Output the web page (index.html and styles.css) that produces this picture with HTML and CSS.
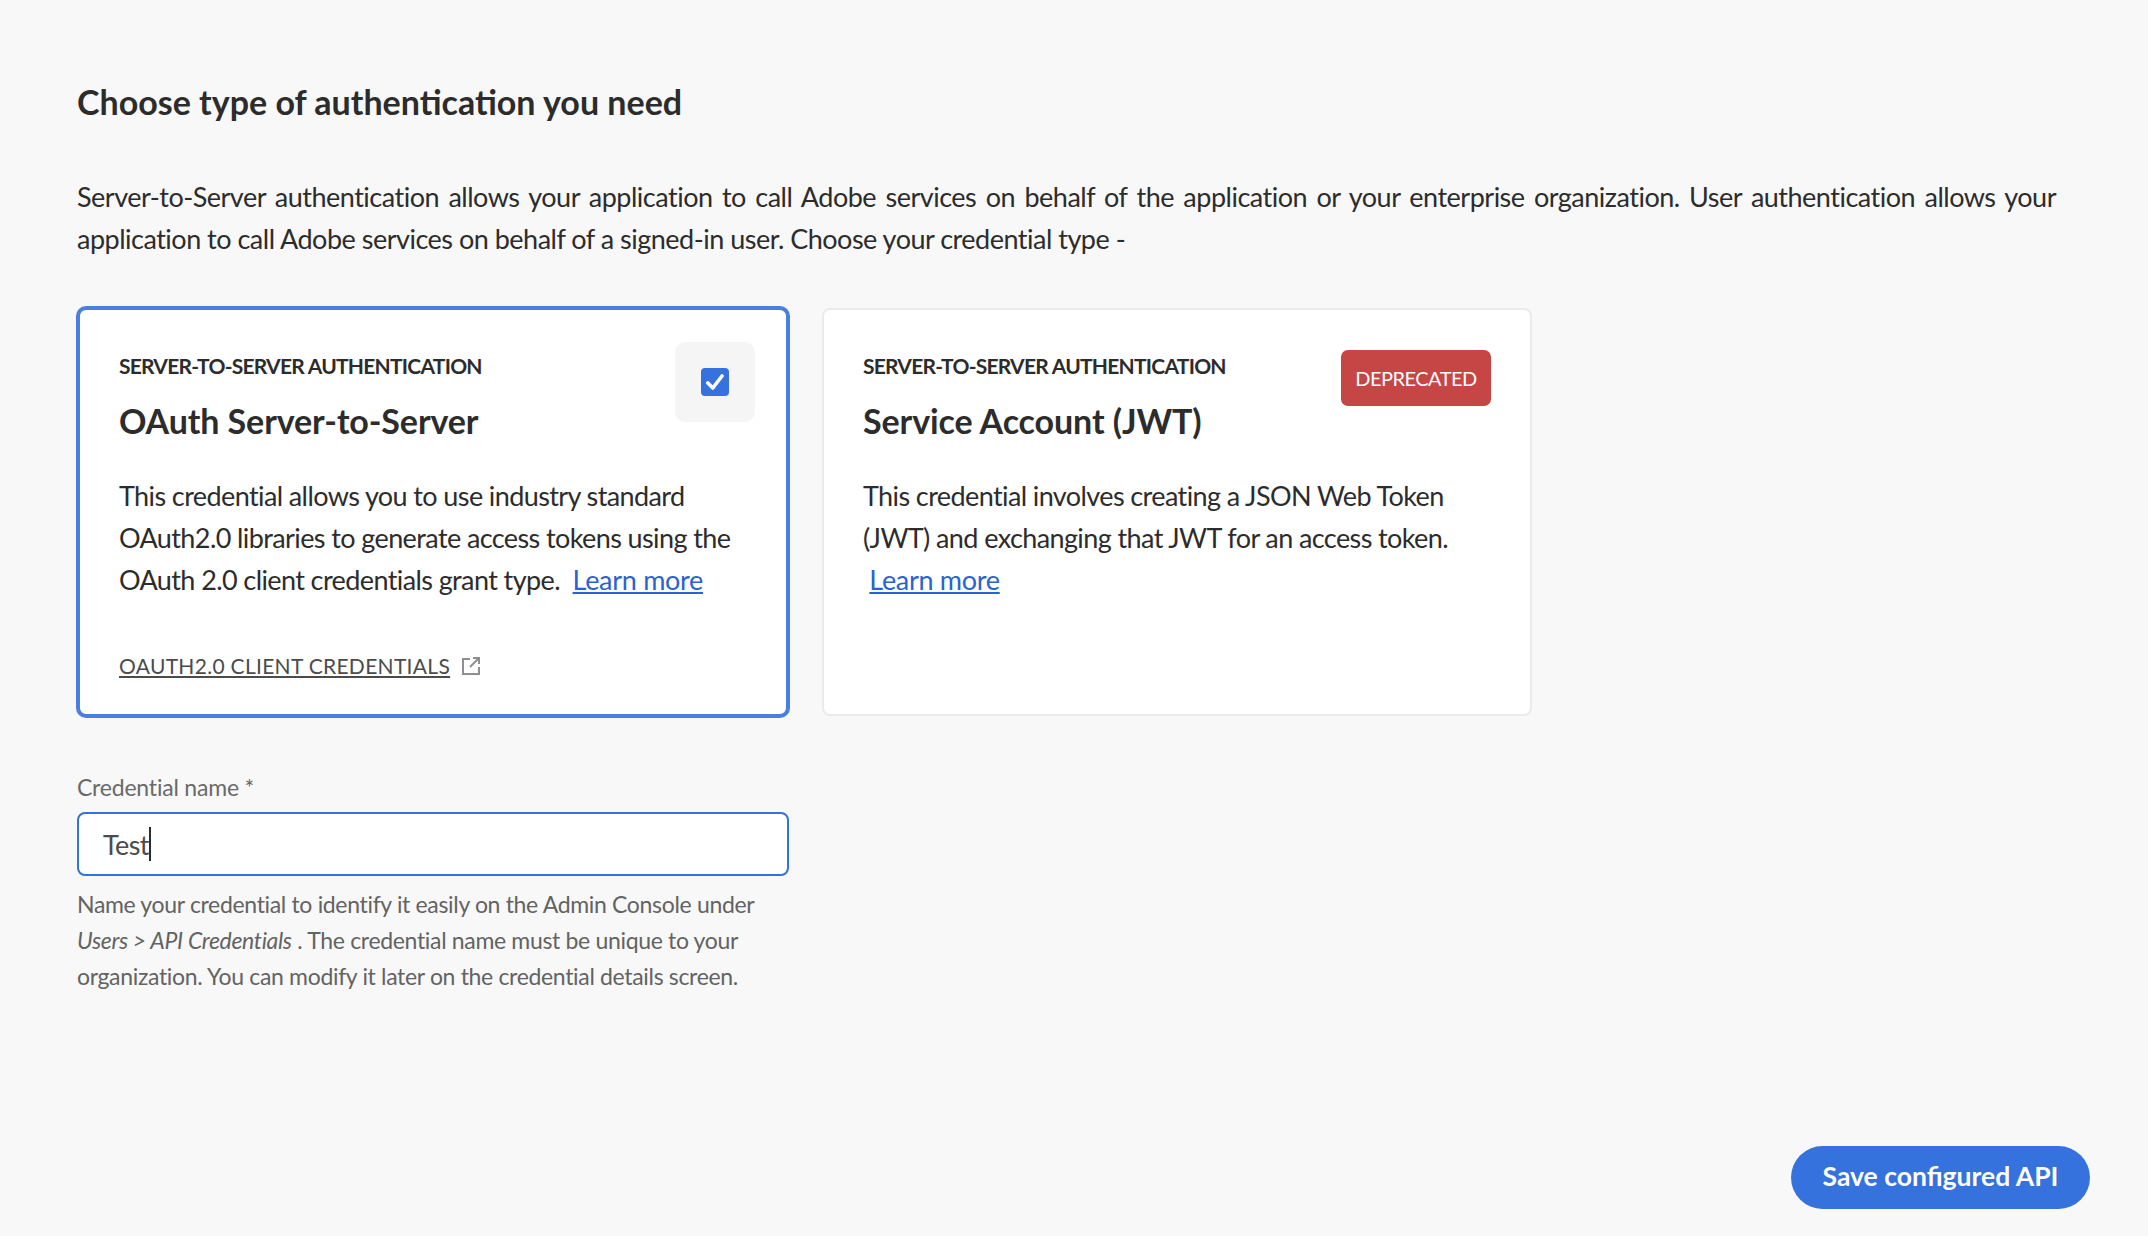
FILE: index.html
```html
<!DOCTYPE html>
<html lang="en">
<head>
    <meta charset="UTF-8">
    <meta name="viewport" content="width=device-width, initial-scale=1.0">
    <title>Choose type of authentication</title>
    <link rel="stylesheet" href="styles.css">
</head>
<body>
    <div class="page">
        <div class="content">
            <h1 class="heading">Choose type of authentication you need</h1>
            <p class="intro">Server-to-Server authentication allows your application to call Adobe services on behalf of the application or your enterprise organization. User authentication allows your application to call Adobe services on behalf of a signed-in user. Choose your credential type -</p>

            <div class="cards">
                <div class="card card-selected">
                    <div class="select-box">
                        <span class="checkbox">
                            <svg width="18" height="16" viewBox="0 0 18 16"><path d="M1.8 9 L6.8 14 L16 2" fill="none" stroke="#fff" stroke-width="3.6" stroke-linecap="round" stroke-linejoin="round"/></svg>
                        </span>
                    </div>
                    <div class="card-label">SERVER-TO-SERVER AUTHENTICATION</div>
                    <h2 class="card-title">OAuth Server-to-Server</h2>
                    <p class="card-text">This credential allows you to use industry standard OAuth2.0 libraries to generate access tokens using the OAuth 2.0 client credentials grant type.&nbsp; <a class="learn" href="#">Learn more</a></p>
                    <div class="card-link">
                        <a href="#">OAUTH2.0 CLIENT CREDENTIALS</a>
                        <svg width="18" height="18" viewBox="0 0 18 18" fill="none" stroke="#8e8e8e" stroke-width="2"><path d="M8 2 H1 V17 H17 V10"/><path d="M8 10 L16 2"/><path d="M11 1 H17 V7"/></svg>
                    </div>
                </div>

                <div class="card card-plain">
                    <div class="badge">DEPRECATED</div>
                    <div class="card-label">SERVER-TO-SERVER AUTHENTICATION</div>
                    <h2 class="card-title">Service Account (JWT)</h2>
                    <p class="card-text">This credential involves creating a JSON Web Token (JWT) and exchanging that JWT for an access token.<br>&nbsp;<a class="learn" href="#">Learn more</a></p>
                </div>
            </div>

            <div class="field">
                <label class="field-label">Credential name *</label>
                <div class="input"><span>Test</span><span class="caret"></span></div>
                <p class="help">Name your credential to identify it easily on the Admin Console under <em>Users &gt; API Credentials</em> . The credential name must be unique to your organization. You can modify it later on the credential details screen.</p>
            </div>
        </div>

        <div class="footer">
            <button class="save">Save configured API</button>
        </div>
    </div>
</body>
</html>
```

FILE: styles.css
```css
* {
    box-sizing: border-box;
}
body {
    margin: 0;
    background-color: #f8f8f8;
    color: #2c2c2c;
    font-family: Lato, "Open Sans", sans-serif;
}
.page {
    display: flex;
    flex-direction: column;
    justify-content: space-between;
    height: 100vh;
}
.content {
    padding: 82px 92px 0 76px;
}
.heading {
    margin: 0;
    padding-left: 1px;
    font-size: 34px;
    line-height: 40px;
    font-weight: 700;
}
.intro {
    margin: 54px 0 0;
    padding-left: 1px;
    font-size: 27px;
    line-height: 42px;
    letter-spacing: -0.5px;
    text-align: justify;
}
.cards {
    display: flex;
    align-items: center;
    gap: 32px;
    margin-top: 46px;
}
.card {
    position: relative;
    background: white;
}
.card-selected {
    width: 714px;
    height: 412px;
    padding: 38px 39px;
    border: 4px solid #4a7fe0;
    border-radius: 10px;
}
.card-plain {
    width: 710px;
    height: 408px;
    padding: 38px 39px;
    border: 2px solid #ebebeb;
    border-radius: 8px;
}
.card-label {
    font-size: 21px;
    line-height: 36px;
    font-weight: 700;
    letter-spacing: -0.75px;
}
.card-title {
    margin: 15px 0 0;
    font-size: 34px;
    line-height: 44px;
    font-weight: 700;
    letter-spacing: -0.1px;
}
.card-text {
    margin: 32px 0 0;
    font-size: 27px;
    line-height: 42px;
    letter-spacing: -0.6px;
}
.learn {
    color: #2a62d0;
    letter-spacing: -0.3px;
}
.card-link {
    display: flex;
    align-items: center;
    gap: 12px;
    margin-top: 47px;
    font-size: 21px;
    line-height: 36px;
    letter-spacing: 0.3px;
}
.card-link a {
    color: #4b4b4b;
}
.select-box {
    position: absolute;
    top: 32px;
    right: 31px;
    display: flex;
    align-items: center;
    justify-content: center;
    width: 80px;
    height: 80px;
    background: #f5f5f5;
    border-radius: 10px;
}
.checkbox {
    display: flex;
    align-items: center;
    justify-content: center;
    width: 28px;
    height: 28px;
    background: #3672dd;
    border-radius: 4px;
}
.badge {
    position: absolute;
    top: 40px;
    right: 39px;
    width: 150px;
    height: 56px;
    background: #c64545;
    color: white;
    border-radius: 7px;
    font-size: 20px;
    line-height: 56px;
    letter-spacing: -0.5px;
    text-align: center;
}
.field {
    width: 712px;
    margin: 51px 0 0 1px;
}
.field-label {
    display: block;
    font-size: 23px;
    line-height: 36px;
    letter-spacing: -0.2px;
    color: #6a6a6a;
}
.input {
    display: flex;
    align-items: center;
    height: 64px;
    margin-top: 7px;
    padding: 0 24px;
    background: white;
    border: 2px solid #3672dd;
    border-radius: 8px;
    font-size: 27px;
    letter-spacing: -0.6px;
    color: #4b4b4b;
}
.caret {
    width: 2px;
    height: 34px;
    background: #2c2c2c;
}
.help {
    margin: 10px 0 0;
    font-size: 23px;
    line-height: 36px;
    letter-spacing: -0.33px;
    color: #636363;
}
.footer {
    display: flex;
    justify-content: flex-end;
    padding: 0 58px 27px 0;
}
.save {
    width: 299px;
    height: 63px;
    padding: 0 0 3px;
    background: #3672dd;
    color: white;
    border: none;
    border-radius: 32px;
    font-family: inherit;
    font-size: 26.5px;
    font-weight: 700;
}
```
